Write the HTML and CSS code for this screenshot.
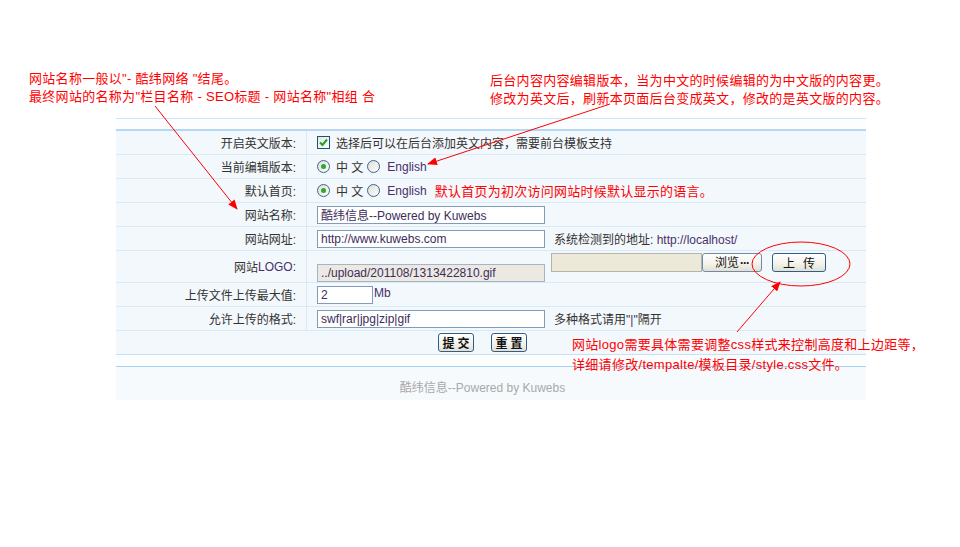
FILE: index.html
```html
<!DOCTYPE html>
<html lang="zh-CN">
<head>
  <meta charset="UTF-8" />
  <title>网站基本设置</title>
  <link rel="stylesheet" href="styles.css">
</head>
<body>
  <div class="page">
    <div class="panel">
      <div class="panel-bar"></div>

      <div class="form-row">
        <div class="form-label">开启英文版本:</div>
        <div class="form-value">
          <span class="check">
            <svg width="11" height="11" viewBox="0 0 11 11"><path d="M2 5.5 L4.5 8 L9 2.5" fill="none" stroke="#21a121" stroke-width="2"/></svg>
          </span>
          <span>选择后可以在后台添加英文内容，需要前台模板支持</span>
        </div>
      </div>

      <div class="form-row">
        <div class="form-label">当前编辑版本:</div>
        <div class="form-value">
          <span class="radio checked"></span><span class="radio-text">中 文</span>
          <span class="radio"></span><span class="radio-text en">English</span>
        </div>
      </div>

      <div class="form-row">
        <div class="form-label">默认首页:</div>
        <div class="form-value">
          <span class="radio checked"></span><span class="radio-text">中 文</span>
          <span class="radio"></span><span class="radio-text en">English</span>
          <span class="note-inline">默认首页为初次访问网站时候默认显示的语言。</span>
        </div>
      </div>

      <div class="form-row">
        <div class="form-label">网站名称:</div>
        <div class="form-value">
          <input class="text-input wide" type="text" value="酷纬信息--Powered by Kuwebs">
        </div>
      </div>

      <div class="form-row">
        <div class="form-label">网站网址:</div>
        <div class="form-value">
          <input class="text-input wide" type="text" value="http://www.kuwebs.com">
          <span class="hint">系统检测到的地址: <span class="en">http://localhost/</span></span>
        </div>
      </div>

      <div class="form-row tall">
        <div class="form-label">网站<span class="en">LOGO</span>:</div>
        <div class="form-value top">
          <input class="text-input wide readonly" type="text" value="../upload/201108/1313422810.gif" readonly>
          <div class="file-group">
            <span class="file-box"></span>
            <button class="btn browse">浏览<span class="dots">···</span></button>
            <button class="btn upload">上传</button>
          </div>
        </div>
      </div>

      <div class="form-row">
        <div class="form-label">上传文件上传最大值:</div>
        <div class="form-value">
          <input class="text-input short" type="text" value="2">
          <span class="unit en">Mb</span>
        </div>
      </div>

      <div class="form-row">
        <div class="form-label">允许上传的格式:</div>
        <div class="form-value">
          <input class="text-input wide" type="text" value="swf|rar|jpg|zip|gif">
          <span class="hint">多种格式请用"<span class="en">|</span>"隔开</span>
        </div>
      </div>

      <div class="button-row">
        <button class="btn action">提交</button>
        <button class="btn action">重置</button>
      </div>

      <div class="panel-bar bottom"></div>
      <div class="panel-footer">酷纬信息--Powered by Kuwebs</div>
    </div>

    <!-- red notes on top of the form -->
    <p class="note note-name">网站名称一般以"- 酷纬网络 "结尾。<br>最终网站的名称为"栏目名称 - SEO标题 - 网站名称"相组 合</p>
    <p class="note note-edit">后台内容内容编辑版本，当为中文的时候编辑的为中文版的内容更。<br>修改为英文后，刷新本页面后台变成英文，修改的是英文版的内容。</p>
    <p class="note note-logo">网站logo需要具体需要调整css样式来控制高度和上边距等，<br>详细请修改/tempalte/模板目录/style.css文件。</p>

    <svg class="marks" width="960" height="547" viewBox="0 0 960 547">
      <defs>
        <marker id="head" markerWidth="10" markerHeight="8" refX="9" refY="4" orient="auto" markerUnits="userSpaceOnUse">
          <path d="M0 0 L10 4 L0 8 Z" fill="#ff0000"/>
        </marker>
      </defs>
      <line x1="155" y1="106" x2="237" y2="209" stroke="#ff0000" stroke-width="1" marker-end="url(#head)"/>
      <line x1="610" y1="104" x2="428" y2="164" stroke="#ff0000" stroke-width="1" marker-end="url(#head)"/>
      <line x1="737" y1="332" x2="780" y2="282" stroke="#ff0000" stroke-width="1" marker-end="url(#head)"/>
      <ellipse cx="801" cy="264" rx="49" ry="22" fill="none" stroke="#ff0000" stroke-width="1"/>
    </svg>
  </div>
</body>
</html>
```

FILE: styles.css
```css
body {
  margin: 0;
  background: #fff;
  color: #333;
  font-family: "Liberation Sans", "Noto Sans CJK SC", sans-serif;
  font-size: 12px;
}

.page {
  position: relative;
  width: 960px;
  height: 547px;
  padding: 118px 0 0 116px;
  box-sizing: border-box;
}

.panel {
  width: 750px;
}

.panel-bar {
  height: 10px;
  background: #fbfdfe;
  border-top: 1px solid #cfe6f6;
  border-bottom: 2px solid #b5d8f2;
}

.panel-bar.bottom {
  height: 11px;
  border-top: 1px solid #c6e1f4;
  border-bottom: 1px solid #a9d2f0;
}

/* Form rows */
.form-row {
  display: grid;
  grid-template-columns: 191px 1fr;
  height: 24px;
  box-sizing: border-box;
  background: #f3f8fc;
  border-bottom: 1px solid #d9eaf7;
}

.form-row.tall {
  height: 32px;
}

.form-label {
  text-align: right;
  padding-right: 10px;
  border-right: 1px solid #d9eaf7;
  display: flex;
  align-items: center;
  justify-content: flex-end;
}

.form-value {
  display: flex;
  align-items: center;
  padding-left: 10px;
  white-space: nowrap;
}

.form-value.top {
  align-items: flex-start;
}

.en {
  color: #472f6b;
}

.check {
  width: 13px;
  height: 13px;
  box-sizing: border-box;
  border: 1px solid #1c5180;
  background: linear-gradient(135deg, #e6e6e0, #fff);
  display: flex;
  align-items: center;
  justify-content: center;
  margin-right: 6px;
}

.radio {
  width: 13px;
  height: 13px;
  box-sizing: border-box;
  border: 1px solid #3d6590;
  border-radius: 50%;
  background: linear-gradient(135deg, #dcdcd6, #fff);
  display: flex;
  align-items: center;
  justify-content: center;
}

.radio.checked::after {
  content: "";
  width: 5px;
  height: 5px;
  border-radius: 50%;
  background: #2fa72f;
}

.radio-text {
  margin: 0 4px 0 6px;
}

.radio-text.en {
  margin-left: 7px;
}

.note-inline {
  color: #ff0000;
  font-size: 13px;
  letter-spacing: 0.25px;
  margin-left: 4px;
}

.text-input {
  height: 18px;
  box-sizing: border-box;
  border: 1px solid #7f9db9;
  padding: 0 3px;
  font-family: "Liberation Sans", "Noto Sans CJK SC", sans-serif;
  font-size: 12px;
  color: #3c2d5c;
  background: #fff;
  outline: none;
}

.text-input.wide {
  width: 228px;
}

.text-input.short {
  width: 56px;
}

.text-input.readonly {
  margin-top: 13px;
  background: #ebe9e2;
  border-color: #a7b4c4;
}

.hint {
  margin-left: 9px;
}

.unit {
  margin-left: 1px;
  margin-top: -4px;
}

.file-group {
  display: flex;
  margin: 2px 0 0 6px;
}

.file-box {
  width: 151px;
  height: 19px;
  box-sizing: border-box;
  background: #ece9d8;
  border: 1px solid #b4b4ac;
}

/* Buttons */
.btn {
  height: 19px;
  box-sizing: border-box;
  padding: 0;
  border: 1px solid #2f5d8c;
  border-radius: 3px;
  background: linear-gradient(#ffffff, #f2f1ea 60%, #e3e0d2);
  font-family: "Noto Sans CJK SC", sans-serif;
  font-size: 12px;
  line-height: 16px;
  color: #111;
}

.btn.browse {
  width: 60px;
  border-color: #6f8aa6;
}

.browse .dots {
  font-family: "Liberation Sans", sans-serif;
  font-weight: bold;
  letter-spacing: -1px;
  margin-left: 1px;
}

.btn.upload {
  width: 54px;
  margin-left: 10px;
  letter-spacing: 8px;
  text-indent: 8px;
}

.btn.action {
  width: 36px;
  font-weight: bold;
  letter-spacing: 3px;
  text-indent: 3px;
}

.button-row {
  display: flex;
  justify-content: center;
  align-items: center;
  gap: 17px;
  padding-right: 17px;
  height: 23px;
  background: #f3f8fc;
}

.panel-footer {
  height: 33px;
  box-sizing: border-box;
  padding: 14px 17px 0 0;
  line-height: 14px;
  text-align: center;
  color: #a9a9a9;
  background: #f6fafd;
}

/* Red remarks */
.note {
  position: absolute;
  margin: 0;
  color: #ff0000;
  font-size: 13px;
  line-height: 18px;
  letter-spacing: 0.3px;
  white-space: nowrap;
}

.note-name {
  left: 29px;
  top: 70px;
}

.note-edit {
  left: 490px;
  top: 72px;
}

.note-logo {
  left: 572px;
  top: 335px;
  line-height: 20px;
}

.marks {
  position: absolute;
  left: 0;
  top: 0;
  pointer-events: none;
}
```
